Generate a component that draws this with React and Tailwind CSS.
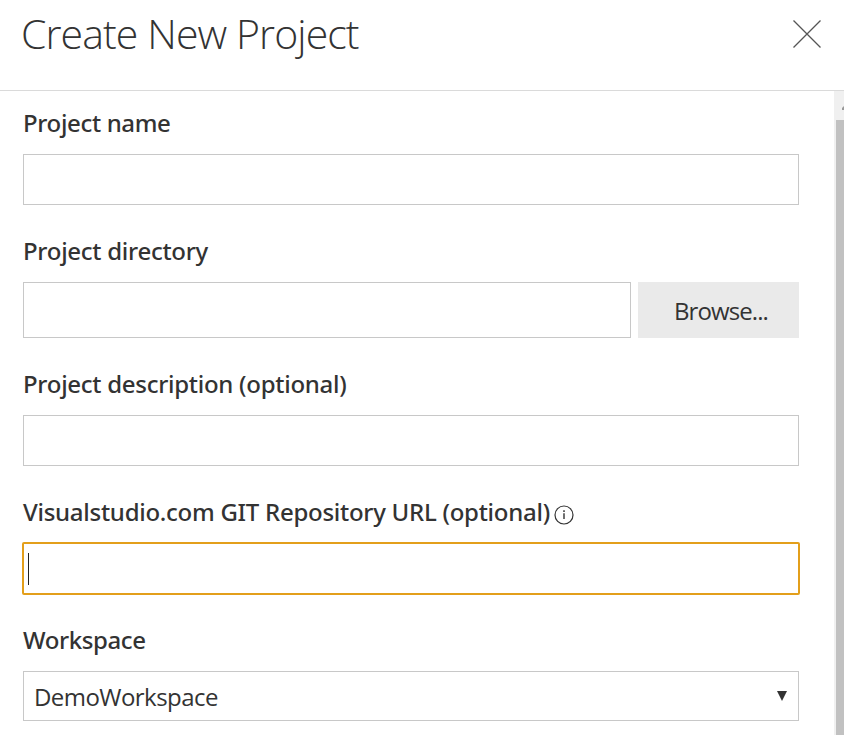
import React from "react";

function Field({ label, tracking, info, children }) {
  return (
    <div className="mb-[14px]">
      <div className="flex h-[63px] items-start pt-[14px]">
        <span className={`whitespace-nowrap font-['Noto_Sans','Open_Sans',sans-serif] text-[24px] font-medium leading-9 ${tracking}`}>{label}</span>
        {info}
      </div>
      {children}
    </div>
  );
}

function InfoIcon() {
  return (
    <svg className="ml-[4px] mt-[11px] h-5 w-5 shrink-0" viewBox="0 0 20 20" fill="none" stroke="#333" strokeWidth="1.2">
      <circle cx="10" cy="10" r="9" />
      <path d="M10 8.3v5.7" strokeWidth="1.4" />
      <path d="M10 5.3v1.6" strokeWidth="1.5" />
    </svg>
  );
}

const box = "border border-[#c8c8c8] bg-white";

export default function App() {
  return (
    <div className="flex h-[735px] w-[844px] flex-col overflow-hidden bg-white font-['Open_Sans','Noto_Sans',sans-serif] text-[#333]">
      <header className="flex h-[91px] shrink-0 items-start justify-between border-b border-[#dadada] pl-[21px] pr-[23px]">
        <h1 className="mt-[2px] whitespace-nowrap text-[41px] font-light leading-[62px] tracking-[-0.9px]">Create New Project</h1>
        <button className="mt-5" aria-label="Close">
          <svg className="h-7 w-7" viewBox="0 0 28 28" stroke="#555" strokeWidth="1.3">
            <path d="M.5 .5 27.5 27.5M27.5 .5 .5 27.5" />
          </svg>
        </button>
      </header>
      <div className="flex min-h-0 flex-1">
        <main className="flex-1 overflow-hidden pl-[23px] pr-[35px]">
          <Field label="Project name" tracking="tracking-[-0.35px]">
            <div className={`h-[51px] ${box}`} />
          </Field>
          <Field label="Project directory" tracking="tracking-[-0.28px]">
            <div className="flex h-[56px] gap-[7px]">
              <div className={`w-[608px] ${box}`} />
              <button className="flex-1 bg-[#eaeaea] pl-[5px] pt-[2px] text-[24px] tracking-[-0.9px]">Browse...</button>
            </div>
          </Field>
          <Field label="Project description (optional)" tracking="tracking-[-0.28px]">
            <div className={`h-[51px] ${box}`} />
          </Field>
          <Field label="Visualstudio.com GIT Repository URL (optional)" tracking="tracking-[-0.27px]" info={<InfoIcon />}>
            <div className="-mx-px -mt-px mb-[-1px] flex h-[53px] items-center rounded-[2px] border-2 border-[#e39f1b] bg-white pl-1">
              <div className="h-8 w-px bg-[#222]" />
            </div>
          </Field>
          <Field label="Workspace" tracking="tracking-[-0.4px]">
            <div className={`flex h-[50px] items-center justify-between pl-[11px] pr-[11px] ${box}`}>
              <span className="-ml-px mt-px text-[24px] tracking-[-0.55px]">DemoWorkspace</span>
              <svg className="mb-px h-[10px] w-[10px]" viewBox="0 0 10 10" fill="#333"><path d="M0 0h10L5 10z" /></svg>
            </div>
          </Field>
        </main>
        <aside className="flex w-[10px] flex-col bg-[#f0f0f0]">
          <div className="flex h-[29px] items-start justify-end overflow-hidden pt-[15px]">
            <svg className="h-[4px] w-[2px]" viewBox="0 0 2 4" fill="#999"><path d="M0 4V2L2 0v4z" /></svg>
          </div>
          <div className="ml-[2px] flex-1 bg-[#c1c1c1]" />
        </aside>
      </div>
    </div>
  );
}
